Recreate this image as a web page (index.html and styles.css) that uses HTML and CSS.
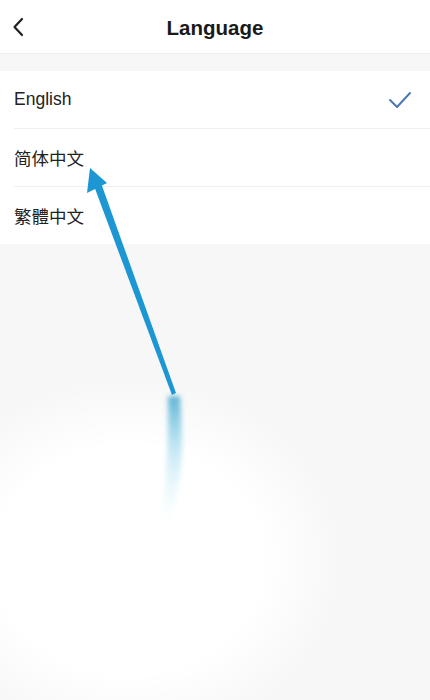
FILE: index.html
```html
<!DOCTYPE html>
<html lang="en">
<head>
  <meta charset="UTF-8">
  <title>Language</title>
  <meta name="viewport" content="width=device-width, initial-scale=1.0">
  <link rel="stylesheet" href="styles.css">
</head>
<body>
<div class="screen">

<header class="topbar">
  <button class="back" aria-label="Back">
    <svg width="12" height="20" viewBox="0 0 12 20"><path d="M10 2 L2.5 10 L10 18" fill="none" stroke="#222" stroke-width="2.2" stroke-linecap="round" stroke-linejoin="round"/></svg>
  </button>
  <h1>Language</h1>
</header>

<ul class="langs">
  <li class="lang selected">
    <span>English</span>
    <svg class="check" width="24" height="18" viewBox="0 0 24 18"><path d="M2 9 L9 16 L22 2" fill="none" stroke="#4b79b5" stroke-width="2" stroke-linecap="round" stroke-linejoin="round"/></svg>
  </li>
  <li class="lang"><span>简体中文</span></li>
  <li class="lang"><span>繁體中文</span></li>
</ul>

<div class="glow"></div>

<svg class="pointer" width="430" height="700" viewBox="0 0 430 700">
  <defs>
    <linearGradient id="trail" x1="0" y1="0" x2="0" y2="1">
      <stop offset="0" stop-color="#3aa3cc" stop-opacity="0.8"/>
      <stop offset="0.4" stop-color="#8dd3ea" stop-opacity="0.55"/>
      <stop offset="1" stop-color="#d0f4fc" stop-opacity="0"/>
    </linearGradient>
    <filter id="soft" x="-100%" y="-20%" width="300%" height="140%">
      <feGaussianBlur stdDeviation="2.5"/>
    </filter>
  </defs>
  <path d="M168 396 L180 396 C183 440 184 480 170 522 L160 522 C168 480 168 440 168 396 Z" fill="url(#trail)" filter="url(#soft)"/>
  <path d="M94 186 L101 183 L176 393 L172 395 Z" fill="#1c97d3"/>
  <path d="M90 168 L107 183 L87 193 Z" fill="#1c97d3"/>
</svg>

</div>
</body>
</html>
```

FILE: styles.css
```css
body {
  margin: 0;
  padding: 0;
  font-family: "Liberation Sans", "Noto Sans CJK SC", sans-serif;
  background: #f7f7f7;
}
.screen {
  height: 700px;
  position: relative;
  overflow: hidden;
}
.topbar {
  height: 53px;
  background: #fff;
  display: flex;
  align-items: center;
  justify-content: center;
  position: relative;
  border-bottom: 1px solid #efefef;
}
.topbar h1 {
  margin: 2px 0 0;
  font-size: 20.5px;
  font-weight: bold;
  color: #1a1a1a;
}
.back {
  position: absolute;
  left: 12px;
  top: 17px;
  background: none;
  border: none;
  padding: 0;
}
.langs {
  list-style: none;
  margin: 17px 0 0;
  padding: 0 0 0 14px;
  background: #fff;
  position: relative;
  z-index: 1;
}
.lang {
  height: 57px;
  display: flex;
  align-items: center;
  justify-content: space-between;
  padding-right: 18px;
  font-size: 17.5px;
  color: #222;
  border-bottom: 1px solid #f0f0f0;
}
.lang:last-child {
  border-bottom: none;
}
.glow {
  position: absolute;
  left: -80px;
  top: 380px;
  width: 420px;
  height: 360px;
  background: radial-gradient(ellipse at center, #fff 0, #fff 45%, rgba(255,255,255,0) 72%);
  pointer-events: none;
}
.pointer {
  position: absolute;
  left: 0;
  top: 0;
  pointer-events: none;
  z-index: 2;
}
```
